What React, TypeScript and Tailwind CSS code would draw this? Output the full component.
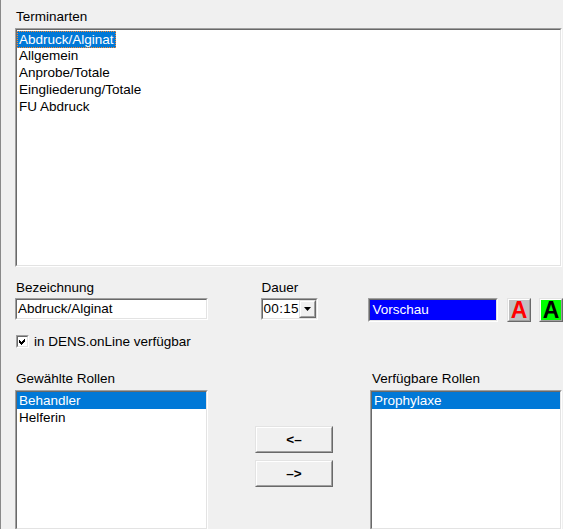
import type { ReactNode } from "react";

const terminarten = [
  "Abdruck/Alginat",
  "Allgemein",
  "Anprobe/Totale",
  "Eingliederung/Totale",
  "FU Abdruck",
];

// Classic 3D sunken frame used by list boxes and edit fields
function Sunken({ className = "", inner = "bg-white", children }: { className?: string; inner?: string; children?: ReactNode }) {
  return (
    <div className={`border border-t-[#a0a0a0] border-l-[#a0a0a0] border-r-white border-b-white ${className}`}>
      <div className={`h-full w-full border border-t-[#696969] border-l-[#696969] border-r-[#e3e3e3] border-b-[#e3e3e3] ${inner}`}>
        {children}
      </div>
    </div>
  );
}

// Classic 3D raised frame used by push buttons
function Raised({ className = "", inner = "bg-[#f0f0f0]", children }: { className?: string; inner?: string; children?: ReactNode }) {
  return (
    <div className={`border border-t-[#e3e3e3] border-l-[#e3e3e3] border-r-[#696969] border-b-[#696969] ${className}`}>
      <div className={`flex h-full w-full items-center justify-center border border-t-white border-l-white border-r-[#a0a0a0] border-b-[#a0a0a0] ${inner}`}>
        {children}
      </div>
    </div>
  );
}

function RoleList({ items, selected }: { items: string[]; selected: number }) {
  return (
    <Sunken className="h-[140px] w-full">
      {items.map((item, i) => (
        <div
          key={item}
          className={`h-[17px] pl-[2px] leading-[17px] ${i === selected ? "bg-[#0078d7] text-white" : "text-black"}`}
        >
          {item}
        </div>
      ))}
    </Sunken>
  );
}

export default function App() {
  return (
    <div className="h-[529px] w-[563px] overflow-hidden border-l border-[#898989] bg-[#f0f0f0] pl-[14px] pt-[9px] font-['Liberation_Sans',Arial,sans-serif] text-[13.5px] text-black">
      <div className="h-[15px] pl-[1px] leading-[15px]">Terminarten</div>

      <Sunken className="mt-[4px] h-[239px] w-[547px]">
        {terminarten.map((t, i) =>
          i === 0 ? (
            <div key={t} className="h-[17px]">
              <span className="inline-block h-[17px] border border-dotted border-[#ff8728] bg-[#0078d7] pl-[1px] pr-[1px] leading-[15px] text-white">
                {t}
              </span>
            </div>
          ) : (
            <div key={t} className="h-[17px] pl-[2px] leading-[17px]">
              {t}
            </div>
          ),
        )}
      </Sunken>

      <div className="mt-[13px] flex h-[42px] items-start">
        <div className="w-[193px]">
          <div className="h-[15px] pl-[1px] leading-[15px]">Bezeichnung</div>
          <Sunken className="mt-[3px] h-[22px] w-full">
            <div className="pl-[1px] leading-[18px]">Abdruck/Alginat</div>
          </Sunken>
        </div>

        <div className="ml-[53px] w-[58px]">
          <div className="h-[15px] pl-[1px] leading-[15px]">Dauer</div>
          <Sunken className="mt-[3px] h-[22px] w-full" inner="bg-white flex">
            <div className="flex-1 pl-[1px] leading-[18px] tracking-[0.3px]">00:15</div>
            <Raised className="h-full w-[17px]">
              <svg width="7" height="4" viewBox="0 0 7 4">
                <path d="M0 0h7L3.5 4z" fill="#000" />
              </svg>
            </Raised>
          </Sunken>
        </div>

        <Sunken className="ml-[50px] mt-[18px] h-[24px] w-[130px]" inner="bg-[#0000ff]">
          <div className="pl-[2px] leading-[19px] text-white">Vorschau</div>
        </Sunken>

        <Raised className="ml-[9px] mt-[18px] h-[24px] w-[24px]" inner="bg-[#c0c0c0]">
          <span className="text-[23px] font-bold leading-none text-[#ff0000]">A</span>
        </Raised>
        <Raised className="ml-[8px] mt-[18px] h-[24px] w-[24px]" inner="bg-[#00ff00]">
          <span className="text-[23px] font-bold leading-none text-black">A</span>
        </Raised>
      </div>

      <div className="mt-[13px] flex h-[13px] items-center">
        <Sunken className="ml-[1px] h-[13px] w-[13px]">
          <svg width="9" height="9" viewBox="0 0 9 9" className="block" shapeRendering="crispEdges">
            <path d="M1 3l2 2 4-4v3l-4 4-2-2z" fill="#000" />
          </svg>
        </Sunken>
        <span className="ml-[5px] leading-[13px]">in DENS.onLine verfügbar</span>
      </div>

      <div className="mt-[23px] flex items-start">
        <div className="w-[193px]">
          <div className="h-[15px] pl-[1px] leading-[15px]">Gewählte Rollen</div>
          <div className="mt-[4px]">
            <RoleList items={["Behandler", "Helferin"]} selected={0} />
          </div>
        </div>

        <div className="ml-[47px] mt-[55px] flex w-[78px] flex-col gap-[7px]">
          <Raised className="h-[27px] w-full">
            <span className="font-semibold leading-none">&lt;–</span>
          </Raised>
          <Raised className="h-[27px] w-full">
            <span className="font-semibold leading-none">–&gt;</span>
          </Raised>
        </div>

        <div className="ml-[37px] w-[192px]">
          <div className="h-[15px] pl-[2px] leading-[15px]">Verfügbare Rollen</div>
          <div className="mt-[4px]">
            <RoleList items={["Prophylaxe"]} selected={0} />
          </div>
        </div>
      </div>
    </div>
  );
}
